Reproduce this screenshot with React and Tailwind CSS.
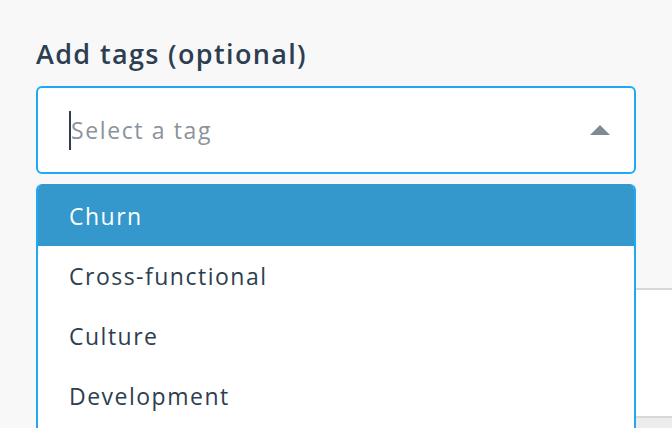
import React from 'react';

const tags = ['Churn', 'Cross-functional', 'Culture', 'Development'];

const App = () => {
  return (
    <div className="relative h-[428px] overflow-hidden bg-[#f8f8f8] font-['Open_Sans',sans-serif]">
      <div className="px-9 pt-[37px]">
        <label className="block text-[27px] font-semibold leading-[34px] tracking-[0.05em] text-[#2d3e50]">
          Add tags (optional)
        </label>
        <div className="relative mt-[15px]">
          <div className="flex h-[88px] items-center rounded-md border-2 border-[#1eaaf1] bg-white pl-[31px] pr-6">
            <span className="h-[39px] w-[2px] bg-[#2d3e50]" />
            <span className="flex-1 text-[23px] tracking-[0.07em] text-[#8a939b]">Select a tag</span>
            <svg width="20" height="10" viewBox="0 0 20 10">
              <path d="M10 0 L20 10 L0 10 Z" fill="#7f8a93" />
            </svg>
          </div>

          {/* open menu */}
          <div className="absolute left-0 right-0 top-[98px] z-10 overflow-hidden rounded-t-md border-2 border-t-0 border-[#1eaaf1] bg-white pb-4">
            {tags.map((tag, i) => (
              <div
                key={tag}
                className={
                  i === 0
                    ? 'flex h-[62px] items-center bg-[#3498cc] pl-[31px] pt-[2px] text-[23px] tracking-[0.065em] text-white'
                    : 'flex h-[60px] items-center pl-[31px] text-[23px] tracking-[0.065em] text-[#2d3e50]'
                }
              >
                {tag}
              </div>
            ))}
          </div>
        </div>
      </div>

      {/* card underneath the menu */}
      <div className="ml-[80px] mt-[114px] h-[128px] border-t-2 border-[#d5d9dc] bg-white" />
      <div className="ml-[80px] h-[40px] border-t-2 border-[#d5d9dc] bg-[#ececec]" />
    </div>
  );
};

export default App;
